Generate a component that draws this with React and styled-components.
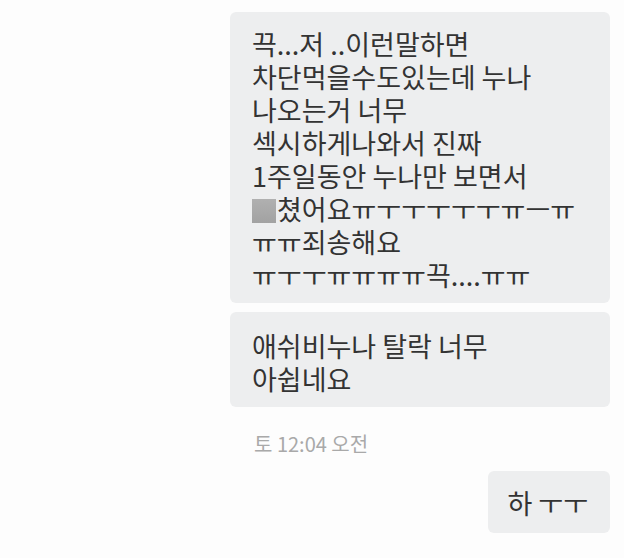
import React from "react";
import styled, { createGlobalStyle } from "styled-components";

const GlobalStyle = createGlobalStyle`
  html, body {
    margin: 0;
    padding: 0;
    background: #fdfdfd;
  }
  body {
    font-family: "Noto Sans CJK KR", "Noto Sans", sans-serif;
  }
`;

const Page = styled.div`
  width: 624px;
  height: 558px;
  overflow: hidden;
  box-sizing: border-box;
  padding: 12px 14px 0 230px;
`;

const Thread = styled.div`
  display: flex;
  flex-direction: column;
  width: 380px;
`;

const Bubble = styled.div`
  align-self: ${(p) => (p.$mine ? "flex-end" : "stretch")};
  background: #edeeef;
  border-radius: 6px;
  color: #333;
  font-size: 27px;
  line-height: 33px;
  padding: ${(p) => p.$pad};
  margin-bottom: ${(p) => p.$gap || 0}px;
`;

const Line = styled.span`
  display: block;
  white-space: nowrap;
`;

const Censored = styled.span`
  display: inline-block;
  width: 24px;
  height: 24px;
  margin-right: 1px;
  vertical-align: -3px;
  background: linear-gradient(180deg, #b0b0b0, #a2a2a2);
`;

const Stamp = styled.div`
  color: #a9a9a9;
  font-size: 20px;
  line-height: 24px;
  padding-left: 24px;
  margin-bottom: 15px;
`;

const first = [
  "끅...저 ..이런말하면",
  "차단먹을수도있는데 누나",
  "나오는거 너무",
  "섹시하게나와서 진짜",
  "1주일동안 누나만 보면서",
];

const App = () => (
  <>
    <GlobalStyle />
    <Page>
      <Thread>
        <Bubble $pad="15px 10px 12px 22px" $gap={9}>
          {first.map((t) => (
            <Line key={t}>{t}</Line>
          ))}
          <Line>
            <Censored />
            쳤어요ㅠㅜㅜㅜㅜㅜㅠㅡㅠ
          </Line>
          <Line>ㅠㅠ죄송해요</Line>
          <Line>ㅠㅜㅜㅠㅠㅠㅠ끅....ㅠㅠ</Line>
        </Bubble>
        <Bubble $pad="17px 10px 12px 22px" $gap={25}>
          <Line>애쉬비누나 탈락 너무</Line>
          <Line>아쉽네요</Line>
        </Bubble>
        <Stamp>토 12:04 오전</Stamp>
        <Bubble $mine $pad="15px 22px 14px 19px">
          <Line>하 ㅜㅜ</Line>
        </Bubble>
      </Thread>
    </Page>
  </>
);

export default App;
